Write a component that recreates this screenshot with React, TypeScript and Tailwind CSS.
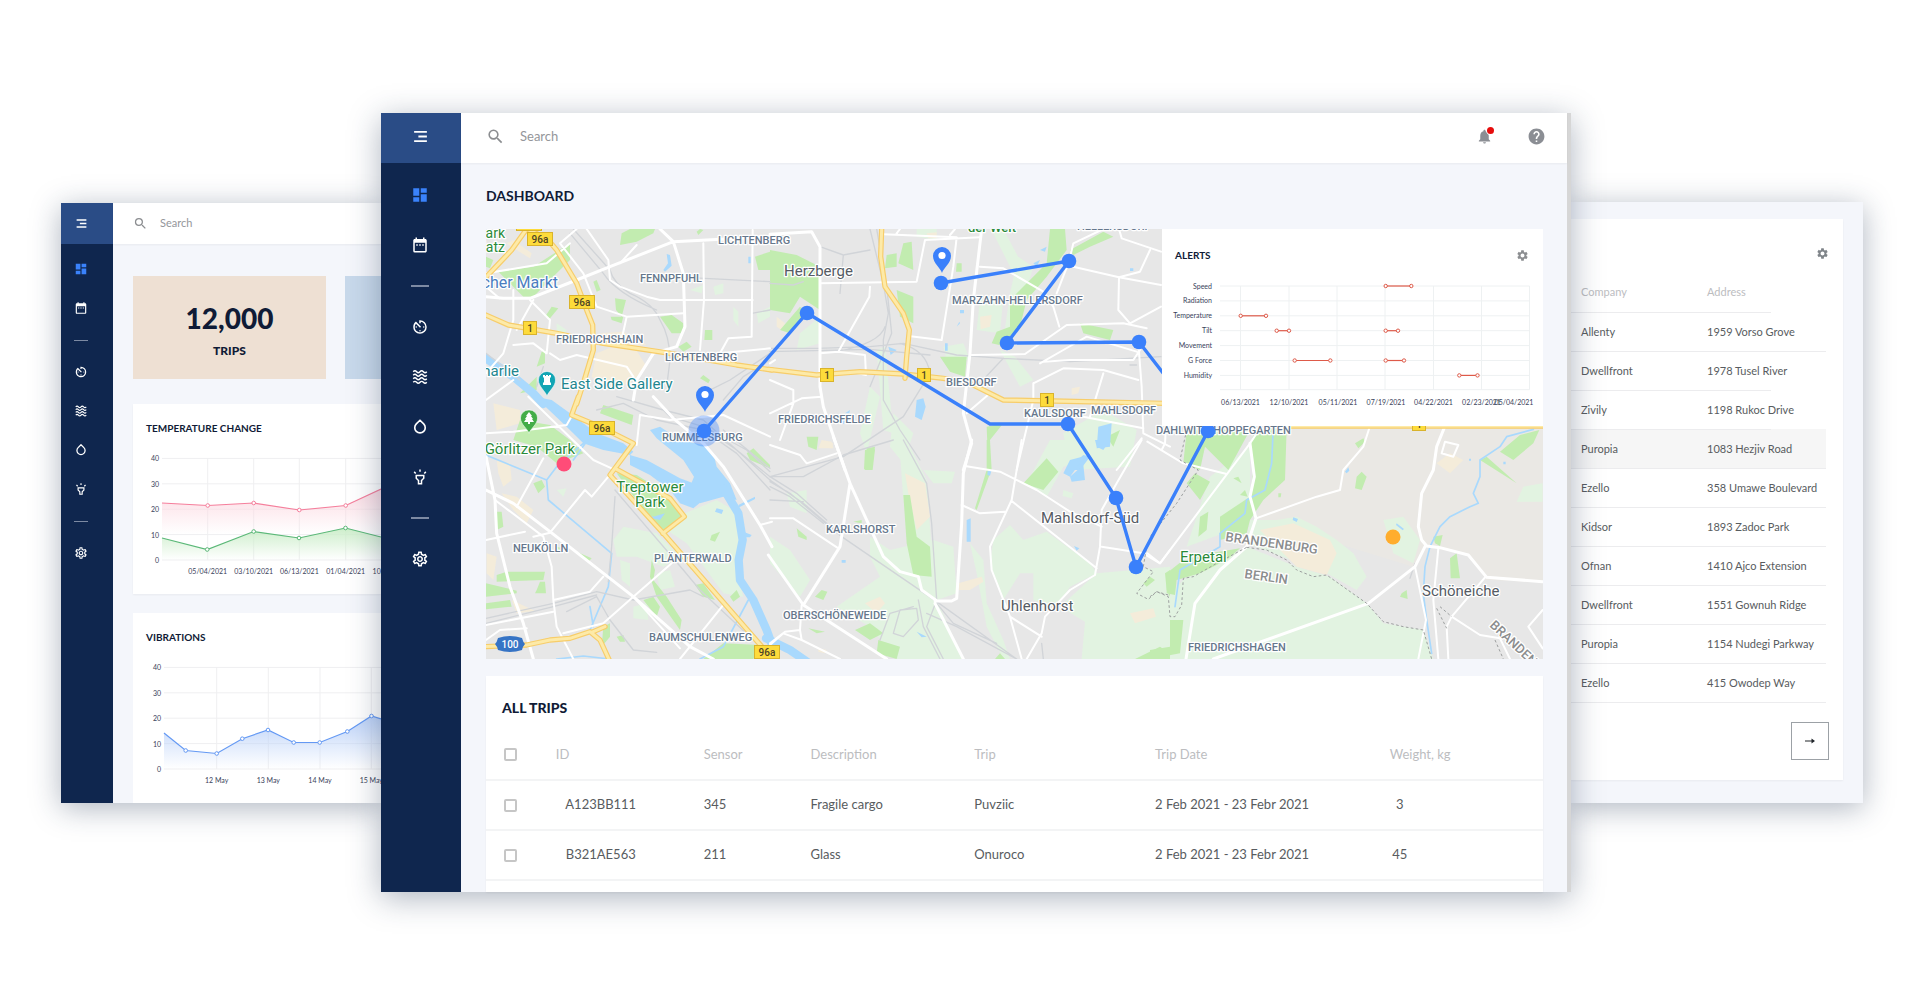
import type { ComponentType } from "react";
import {
  MdDashboard,
  MdDateRange,
  MdAvTimer,
  MdOutlineHighlight,
  MdOutlineSettings,
  MdSettings,
  MdSearch,
  MdNotifications,
  MdHelp,
} from "react-icons/md";

type Point = [number, number];

const DropIcon = ({ size }: { size?: number }) => (
  <svg viewBox="0 0 24 24" width={size} height={size} fill="none">
    <path
      d="M12 3 7.1 7.9a7 7 0 1 0 9.8 0Z"
      stroke="currentColor"
      strokeWidth="2.2"
      strokeLinejoin="round"
    />
  </svg>
);

const WAVE = "q2.25-2.6 4.5 0t4.5 0 4.5 0 4.5 0";

const WavesIcon = ({ size }: { size?: number }) => (
  <svg viewBox="0 0 24 24" width={size} height={size} fill="none">
    <path
      d={`M3 5${WAVE}M3 9.7${WAVE}M3 14.4${WAVE}M3 19.1${WAVE}`}
      stroke="currentColor"
      strokeWidth="1.9"
    />
  </svg>
);

const MenuIcon = ({ size }: { size?: number }) => (
  <svg viewBox="0 0 24 24" width={size} height={size} stroke="currentColor" strokeWidth="2.6">
    <path d="M3 5.5h18M9 12h12M3 18.5h18" />
  </svg>
);

type NavItem = { label: string; Icon: ComponentType<{ size?: number }>; active?: boolean };

const NAV: NavItem[][] = [
  [
    { label: "Dashboard", Icon: MdDashboard, active: true },
    { label: "Calendar", Icon: MdDateRange },
  ],
  [
    { label: "Speed", Icon: MdAvTimer },
    { label: "Vibrations", Icon: WavesIcon },
    { label: "Humidity", Icon: DropIcon },
    { label: "Light", Icon: MdOutlineHighlight },
  ],
  [{ label: "Settings", Icon: MdOutlineSettings }],
];

const Sidebar = ({ compact }: { compact?: boolean }) => (
  <aside
    className={`shrink-0 bg-[#0f264e] text-white ${compact ? "w-[52px]" : "w-[80px]"}`}
  >
    <button
      aria-label="Menu"
      className={`flex w-full items-center justify-center bg-[#2a4c86] ${
        compact ? "h-[41px] pr-3" : "h-[50px] pr-0.5 pb-[3px]"
      }`}
    >
      <MenuIcon size={compact ? 13 : 17} />
    </button>
    <nav className={compact ? "pt-[6px] pr-3" : "pt-[7px] pr-0.5"}>
      {NAV.map((group, i) => (
        <div key={i}>
          {i > 0 && (
            <div
              className={`flex items-center justify-center ${compact ? "h-[25px]" : "h-8"}`}
            >
              <hr
                className={`border-0 bg-[#7d8aa3] ${compact ? "h-px w-[14px]" : "h-[2px] w-[18px]"}`}
              />
            </div>
          )}
          {group.map(({ label, Icon, active }) => (
            <button
              key={label}
              aria-label={label}
              className={`flex w-full items-center justify-center ${
                compact ? "h-[39px]" : "h-[50px]"
              } ${active ? "text-[#3a82fb]" : "text-white"}`}
            >
              <Icon size={compact ? 14 : 18} />
            </button>
          ))}
        </div>
      ))}
    </nav>
  </aside>
);

const yFor = (v: number) => 116 - v * 2.54;

type Series = { color: string; fill: string; points: Point[]; dots: number };

const LineChart = ({
  id,
  left,
  series,
  ticks,
}: {
  id: string;
  left: number;
  series: Series[];
  ticks: { x: number; label: string }[];
}) => (
  <svg viewBox="0 0 248 150" preserveAspectRatio="xMinYMin slice" className="h-[150px] w-full">
    <defs>
      {series.map((s, i) => (
        <linearGradient key={i} id={`${id}-${i}`} x1="0" y1="0" x2="0" y2="1">
          <stop offset="0" stopColor={s.fill} />
          <stop offset="1" stopColor={s.fill} stopOpacity="0" />
        </linearGradient>
      ))}
    </defs>
    {[0, 10, 20, 30, 40].map((v) => (
      <g key={v}>
        <line x1={left} x2="248" y1={yFor(v)} y2={yFor(v)} stroke="#efeff1" />
        <text x={left - 3} y={yFor(v) + 3} textAnchor="end" fontSize="7" fill="#39425a">
          {v}
        </text>
      </g>
    ))}
    {ticks.map((t) => (
      <g key={t.label}>
        <line x1={t.x} x2={t.x} y1={yFor(40)} y2={yFor(0)} stroke="#efeff1" />
        <text x={t.x} y="130" textAnchor="middle" fontSize="7" fill="#39425a">
          {t.label}
        </text>
      </g>
    ))}
    {series.map((s, i) => (
      <g key={i}>
        <path
          d={`M${s.points.join(" L")} L248 ${i === 0 && series.length > 1 ? 90 : 116} L${left} ${
            i === 0 && series.length > 1 ? 90 : 116
          }Z`}
          fill={`url(#${id}-${i})`}
        />
        <polyline points={s.points.join(" ")} fill="none" stroke={s.color} strokeWidth="1.2" />
        {s.points.slice(1, 1 + s.dots).map(([x, y]) => (
          <circle key={x} cx={x} cy={y} r="1.8" fill="#fff" stroke={s.color} />
        ))}
      </g>
    ))}
  </svg>
);

const TEMPERATURE: Series[] = [
  {
    color: "#f57f9c",
    fill: "#fcdbe3",
    dots: 4,
    points: [[29, 59], [74.7, 61.5], [120.7, 59], [166.3, 66], [212.7, 61.5], [248, 45]],
  },
  {
    color: "#5bb878",
    fill: "#cdeecb",
    dots: 4,
    points: [[29, 94], [74.2, 105.5], [120.7, 87.5], [166, 94], [212.5, 84], [248, 93]],
  },
];

const VIBRATIONS: Series[] = [
  {
    color: "#6499f4",
    fill: "#bdd3f9",
    dots: 8,
    points: [
      [31, 80], [52.7, 97.5], [83.7, 100.5], [109.3, 85.7], [135, 77],
      [160.7, 89.5], [186.7, 89.5], [214.3, 78.5], [238.5, 63], [248, 66],
    ],
  },
];

const ChartsWindow = () => (
  <section className="flex w-[320px] shrink-0 overflow-hidden bg-[#f4f6fb] shadow-[0_5px_28px_rgba(30,50,80,0.36)]">
    <Sidebar compact />
    <div className="min-w-0 flex-1">
      <label className="flex h-[41px] items-center gap-3 bg-white pl-5 shadow-xs">
        <MdSearch size={15} className="text-[#8b8d90]" />
        <input
          aria-label="Search charts"
          placeholder="Search"
          className="w-24 text-[11px] outline-none placeholder:text-[#94969a]"
        />
      </label>
      <div className="flex flex-col pt-8 pl-5">
        <div className="flex gap-[19px]">
          <div className="h-[103px] w-[193px] shrink-0 bg-[#eee0d3] pt-[26px] text-center text-[#101b36]">
            <p className="text-[28px] leading-8 font-black">12,000</p>
            <p className="mt-[5px] text-[12px] leading-6 font-black">TRIPS</p>
          </div>
          <div className="flex-1 bg-[#c8d9eb]" />
        </div>
        <div className="mt-[25px] h-[190px] bg-white shadow-xs">
          <h2 className="h-10 pt-4 pl-[13px] text-[10px] leading-4 font-bold text-[#101b36]">
            TEMPERATURE CHANGE
          </h2>
          <LineChart
            id="temperature"
            left={29}
            series={TEMPERATURE}
            ticks={[
              { x: 74.7, label: "05/04/2021" },
              { x: 120.7, label: "03/10/2021" },
              { x: 166.3, label: "06/13/2021" },
              { x: 212.7, label: "01/04/2021" },
              { x: 259, label: "10/24/2021" },
            ]}
          />
        </div>
        <div className="mt-[19px] h-[190px] bg-white">
          <h2 className="h-10 pt-4 pl-[13px] text-[10px] leading-4 font-bold text-[#101b36]">
            VIBRATIONS
          </h2>
          <LineChart
            id="vibrations"
            left={31}
            series={VIBRATIONS}
            ticks={[
              { x: 83.7, label: "12 May" },
              { x: 135.3, label: "13 May" },
              { x: 187, label: "14 May" },
              { x: 238.3, label: "15 May" },
            ]}
          />
        </div>
      </div>
    </div>
  </section>
);

// Every tile has its own 3x coordinate space, placed by `at`.
type Tile = {
  at: string;
  meadow: string;
  park: string;
  sand: string;
  water: string;
  stream?: string;
  river?: string;
  rail: string;
  road: string;
  street: string;
  highway: string;
  border?: string;
};

const TILES: Tile[] = [
  {
    at: "translate(-116 -129) scale(.33333)",
    meadow:
      "M1090 620 1105 635 1105 680 1090 660ZM1030 560 1060 550 1060 580 1035 585ZM960 570 1000 555 995 580ZM1160 640 1200 620 1200 650 1165 670ZM560 670 590 690 580 720 560 700Z",
    park:
      "M385 515 490 500 600 430 600 480 560 520 520 560 490 590 460 590 430 560ZM750 435 755 400 780 387 855 387 850 400 800 425ZM870 650 905 645 940 670 940 700 905 700ZM735 595 768 600 755 650 738 630ZM722 650 760 650 755 670 725 660ZM1005 690 1027 690 1027 720 1003 720ZM525 650 545 620 565 625 540 655ZM1155 470 1200 455 1200 510 1165 510ZM925 740 950 725 965 740 940 755ZM990 835 1000 825 1020 840 1015 850ZM500 800 515 755 525 750 525 790ZM450 880 500 830 500 870ZM348 470 370 480 360 505 348 500ZM670 545 680 540 692 570 680 575ZM980 395 990 387 1000 390 985 405Z",
    sand:
      "M680 760 780 720 830 800 780 850 700 870 665 830ZM410 430 430 420 485 460 480 475 440 450ZM690 700 760 695 830 735 760 740Z",
    water: "M885 515 905 497 900 465 890 462 894 490 880 510ZM1135 470 1142 470 1142 490 1135 490Z",
    river: "M340 770 430 830 490 880 520 912",
    rail:
      "M610 387 720 510 Q730 550 780 580 850 610 870 660 900 710 900 780 L890 860M600 400 700 520 Q740 580 860 630M900 530 1200 545M1200 760 1080 840 1000 880M348 760 400 800 450 840M1200 780 1120 830 1060 900M520 800 500 860M1145 640 1200 630",
    road:
      "M348 590 400 595 480 595 620 540 720 500 910 425 1200 410M870 387 910 425 940 520 945 680 920 740 850 760 800 840 790 900",
    street:
      "M650 387 715 480 720 540 750 560 830 590 870 600 1148 600M800 435 750 490M1000 430 1002 600 990 750M1148 390 1145 710 1075 715 1050 760M348 520 530 490 600 430M620 387 570 430 640 520 680 620 770 650 940 640M770 650 750 740M430 570 430 660 400 760 348 820M490 600 440 690M480 600 540 660 530 760 490 730 430 735M540 760 570 780 620 765 770 800 790 830M348 560 388 595M348 900 430 840M1050 760 1200 745",
    highway:
      "M470 387 425 450 340 540M470 387 530 415 560 450 620 550 650 630 668 675 670 750 640 850 620 912M340 642 415 675 560 700 700 730 900 760 1100 795 1206 810",
  },
  {
    at: "translate(-116 171) scale(.33333)",
    meadow:
      "M945 340 1040 300 1090 330 1110 400 1100 520 1120 590 1060 580 950 430 890 390ZM730 420 760 380 860 400 930 470 880 500 800 470 740 470ZM860 520 900 510 915 560 870 570ZM790 620 830 610 835 660 790 655ZM750 480 780 490 780 560 755 540ZM560 270 590 265 580 290Z",
    park:
      "M740 220 800 225 905 290 940 350 880 395 820 330ZM348 610 420 600 425 620 348 628ZM380 525 410 515 525 515 520 540 380 545ZM348 550 440 572 440 580 348 590ZM700 15 790 45 785 75 690 40ZM450 60 540 75 600 120 640 160 560 190 500 140 430 120ZM1130 160 1150 145 1200 195 1200 205 1140 180ZM620 455 665 475 655 485ZM845 480 855 510 850 540 890 590 935 660 930 690 860 590 840 530ZM1000 777 1060 730 1170 735 1150 777ZM820 600 850 590 870 620 860 650ZM975 555 1000 550 1035 600 1000 590ZM1080 590 1100 570 1110 590 1090 605ZM1025 405 1050 395 1035 425 1020 420ZM695 740 700 680 720 670 720 710ZM490 250 515 240 525 260 505 280ZM380 335 395 335 400 380 380 390ZM500 570 510 545 525 545 528 580 495 580ZM740 710 760 705 765 725 750 725ZM560 440 580 445 570 455Z",
    sand:
      "M380 180 420 190 425 240 400 260 385 220ZM395 280 440 290 490 330 470 370 430 330ZM350 460 380 470 370 540 350 520ZM425 600 495 633 440 640ZM370 10 450 30 450 70 380 90Z",
    water:
      "M495 -10 545 0 600 40 680 100 760 130 790 155 780 165 700 150 640 130 590 80ZM780 165 830 180 930 235 970 250 980 290 1000 300 970 325 930 310 900 270 840 225 780 195ZM840 90 870 80 930 120 1000 135 1030 160 1040 200 1080 250 1100 300 1060 290 990 310 960 260 972 230 940 180 860 115ZM835 345 850 350 885 340 870 360 845 355ZM1040 325 1060 330 1055 342 1035 335ZM1105 315 1155 290 1155 297 1108 322ZM1120 395 1145 405 1140 412 1120 412Z",
    river: "M1060 265 1105 340 1118 420 1106 480 1110 540 1150 600 1190 690 1215 760",
    stream:
      "M348 165 530 240 535 300 725 460 715 560 660 690M530 240 560 200 640 130M1135 600 1060 740 990 777M660 620 670 680M560 777 640 768 720 777M660 110 610 180",
    rail:
      "M735 290 725 440 715 545M735 270 940 510 990 570 1150 720M348 655 550 610 680 575 790 600 960 570 1000 590M348 670 550 620 680 585M590 635 680 590 720 660 790 750 860 757M740 -10 880 30 900 50 1000 80 1100 150 1200 230M1000 90 1100 160 1200 270M1020 90 1130 150 1200 215M1060 90 1200 205M880 30 1000 60 1200 240M680 30 760 10 860 60 1000 90",
    road:
      "M348 270 430 310 540 395 790 590 960 740 1030 777M850 -10 910 55 1000 130 1060 200 1170 375 1206 440M348 170 375 300 380 400 420 560 460 670 490 777",
    street:
      "M375 300 520 410 545 500 550 600 560 680 610 777M348 100 430 95 590 75M475 -10 670 180 725 205M520 175 440 320M348 420 465 395M490 410 540 398 645 270 665 290 715 230M550 600 660 575 700 530M348 675 550 635M580 700 700 670 790 590 905 490M790 590 930 745M1060 615 930 777M348 720 390 690 470 685M800 135 810 45 900 60 1060 45 1200 110M1170 375 1206 365M590 75 610 40",
    highway:
      "M625 -10 605 45 690 80 790 130 720 225 880 400 1206 775M735 205 900 295 943 350 878 400M340 740 470 735 540 720 600 715 660 695 690 720 720 785M705 680 665 697",
  },
  {
    at: "translate(284 -29) scale(.33333)",
    meadow:
      "M745 170 790 200 760 300 720 440 700 420 720 280ZM90 400 150 350 150 430 80 450ZM320 450 345 440 370 700 340 690ZM690 450 735 470 790 540 750 560ZM1000 630 1100 690 1080 800 900 810 880 700ZM370 640 430 700 400 790 360 740ZM520 440 580 430 600 480 530 480ZM665 90 700 87 760 200 740 240ZM270 700 300 560 330 590 290 760ZM440 87 500 87 500 120 440 110ZM630 300 700 290 690 400 620 390Z",
    park:
      "M0 150 80 165 150 200 150 330 90 290 60 340 0 330ZM350 165 380 160 380 200 345 205ZM400 130 425 125 430 210 385 190ZM380 270 430 290 430 370 390 350ZM510 470 590 470 585 530 540 515ZM840 87 885 87 890 150 830 230 770 300 750 380 710 440 665 430 680 395 720 380 720 300 830 190ZM900 150 1000 95 1030 110 960 140 910 165ZM930 370 1030 390 1020 420 940 400ZM650 680 700 670 660 720 665 810 655 810ZM290 745 315 740 305 810 285 810ZM110 710 145 710 140 750 115 740ZM1010 710 1050 690 1030 740ZM560 190 575 190 575 215 558 215ZM30 390 90 320 110 340 60 400Z",
    sand:
      "M470 100 500 97 500 115 475 115ZM155 720 185 725 190 745 145 745ZM630 350 665 345 660 380 632 388ZM905 565 930 560 925 580 905 585ZM20 350 45 370 35 390 20 380Z",
    water:
      "M440 600 460 595 467 620 455 660 435 650ZM985 680 1025 670 1020 740 980 745ZM890 810 940 765 960 770 930 810ZM525 430 533 430 533 452 525 452ZM355 440 380 450 362 465ZM810 150 830 140 825 155ZM1080 205 1090 205 1090 213 1080 213ZM225 640 240 630 238 640ZM210 670 225 655 222 672ZM570 330 582 330 582 340 570 340ZM560 380 568 365 570 370ZM790 190 810 180 800 200Z",
    rail:
      "M0 445 140 445 300 440 400 430 560 465 700 475 900 485 1173 470M0 455 300 448 480 465M300 87 340 250 355 340 340 420 340 600 390 690 450 780M320 87 350 260 365 400 300 560M345 380Q330 430 200 455M390 430Q470 450 480 520L400 650 220 770 0 830M150 140 220 165 300 150M0 250 70 255 100 245M220 165 210 280M700 475 620 560M1100 495 1080 495",
    road:
      "M0 103 125 95 150 140 150 560 160 620 225 810M635 87 610 300 600 460 580 640 605 730 580 810",
    street:
      "M150 250 440 245 465 120 630 112M340 103 560 112 550 200 515 420 415 408M380 100 390 87M540 105 555 87M300 260 298 290 205 455 150 460M205 455 285 465 288 525 265 520M630 200 700 205 820 275 850 320 868 380M910 200 1047 232 1173 255M897 185 860 280M897 185 910 130 1000 87M1047 87 1055 115 1173 155M1140 150 1110 215 1047 232 1045 330 1080 370 1173 320M605 465 765 462 890 375 1060 370 1130 385M820 485 900 480 1090 480 1110 450M810 490 880 450 950 410 1100 455M790 550 880 505 1000 510 1105 540M790 550 790 600 740 810M1000 520 960 650M1105 430 1115 560 1120 700 1200 740M940 650 1120 685M1115 715 1040 810M0 540 70 570 70 610 30 720M0 640 95 595 155 590M0 735 90 765 110 790 200 760M590 640 660 580M0 490 15 480",
    highway:
      "M335 87 332 170 345 260 400 340 418 390 410 470 405 535M-4 508 140 525 270 515 400 522 520 535 600 550 700 600 850 603 1180 610",
  },
  {
    at: "translate(284 211) scale(.33333)",
    meadow:
      "M0 290 60 330 120 420 90 470 0 370ZM300 290 360 330 490 300 550 320 560 460 500 480 580 657 380 657 300 560 200 500 330 410 300 350ZM460 90 555 95 545 130 490 130ZM670 300 720 255 760 300 830 275 960 370 980 400 900 440 860 500 790 480 790 400 750 400 700 480 660 370ZM980 400 1200 380 1200 657 935 657 945 545 870 500ZM50 160 110 150 110 220 60 200ZM840 0 960 0 940 60 880 80 830 170 770 130ZM390 40 420 20 470 120 490 400 440 300 400 180ZM880 150 910 160 905 175 878 168ZM600 310 640 360 650 490 700 600 720 657 700 657 650 560 620 400Z",
    park:
      "M760 130 830 55 865 95 820 150ZM400 165 420 165 440 290 480 320 485 410 430 405 410 310ZM285 30 315 28 308 90 282 88ZM325 600 390 620 380 657 320 640ZM255 570 300 550 340 580 300 600ZM650 0 660 0 660 100 620 210 615 205 650 90ZM1095 657 1170 620 1200 640 1200 657ZM80 265 110 290 110 300 85 290ZM115 565 165 575 140 580ZM250 245 275 240 275 250ZM135 470 155 450 172 455 160 480ZM1120 430 1140 410 1155 420 1130 440ZM675 657 690 640 705 657ZM1185 400 1200 390 1200 470 1190 450Z",
    sand:
      "M405 100 465 130 480 230 440 270 415 160ZM285 490 330 470 345 490 320 520ZM565 430 635 410 640 425 600 450 565 450ZM1080 520 1150 505 1158 530 1095 550ZM145 625 170 630 165 640 145 635ZM155 5 190 10 185 25 150 22Z",
    water:
      "M590 240 602 235 602 305 590 305ZM880 100 900 60 945 48 900 110ZM900 110 940 75 945 120 905 125ZM975 0 1020 0 1000 30 980 20ZM440 575 470 590 455 592ZM215 360 227 360 227 368 215 368ZM653 93 664 93 660 107 652 105ZM912 318 928 325 920 332Z",
    river: "M-12 595 60 630 115 668",
    rail:
      "M0 125 60 160 215 290 500 485 740 657M0 110 80 160 170 240M0 140 60 170 160 250M0 120 100 190 200 275M400 0 470 130 485 250 500 480 470 560 520 657M370 0 220 45 100 110 0 110M0 180 100 185M370 580 390 510 440 505 445 540 400 590ZM330 600 360 520 430 500M820 657 815 610M500 490 550 550 680 610M445 480 460 560 510 657M470 520 560 560 740 657",
    road:
      "M190 -10 240 130 210 320 100 495 -5 345M240 130 340 350 390 395 445 410 455 450 500 482M495 490 580 657M100 495 350 657M605 0 580 100 575 250 560 475 545 483 495 482",
    street:
      "M0 235 70 235 205 325M585 78 690 95 800 150 900 215 995 260M755 0 725 180 660 320 665 390 720 530 755 657M720 530 815 590M770 657 815 580 825 530 900 450 975 405 990 320 995 210 1040 130 1115 0M725 183 980 385M995 320 1120 340 1170 370 1200 330M575 195 630 220 705 215M0 610 45 575 90 570 95 495M0 615 40 580 95 600 210 657M90 570 95 600",
    highway: "",
    border: "M1160 260 1130 320 1120 380 1150 395 1100 460 1135 478 1160 455 1195 465",
  },
  {
    at: "translate(664 191) scale(.33333)",
    meadow:
      "M55 530 100 480 290 380 440 440 540 470 650 550 700 610 820 630 850 717 55 717ZM180 170 300 80 300 230 310 290 220 340 110 380ZM300 300 380 300 440 290 500 320 560 360 610 400 650 470 620 510 530 460 480 440 290 370ZM700 300 760 290 810 360 790 430 730 400ZM1120 200 1178 190 1178 245 1100 245Z",
    park:
      "M110 30 300 30 235 150 165 80 150 150 100 130ZM320 25 410 25 405 180 340 240 300 300 290 340 210 360 210 290 300 230 310 150 300 70ZM50 460 100 420 180 400 270 385 230 420 150 460 80 480 75 525 50 520ZM150 290 175 275 170 330 145 350ZM110 190 135 160 180 185 150 240ZM1050 95 1110 45 1168 30 1150 70 1090 120ZM990 120 1010 110 1100 190ZM615 70 640 55 645 65 625 85ZM620 170 635 155 650 170 635 210 615 205ZM850 350 878 345 870 378 855 370ZM900 415 920 400 930 475 902 475ZM755 520 770 510 773 537 750 530ZM60 600 100 600 90 700 0 717 0 690 60 680ZM270 225 285 210 293 230ZM250 175 265 170 275 190ZM385 220 394 220 392 232 385 232Z",
    sand:
      "M330 330 430 310 540 360 560 400 530 465 440 440ZM860 130 900 100 940 120 900 160Z",
    water:
      "M585 155 595 142 598 152 590 160ZM430 292 444 297 440 306 428 300ZM740 310 762 327 758 331 738 315ZM1060 125 1067 125 1067 133 1060 133ZM957 116 963 116 963 122 957 122Z",
    stream:
      "M370 18 365 130 345 210 290 240 285 280 210 340 210 380 90 450 75 560M1150 28 1070 50 1050 80 990 120 990 170 970 220 985 250 960 260 900 290 870 320 840 380 825 440 820 520 830 600 845 700",
    rail: "M795 430 780 475M645 0 600 20",
    road:
      "M300 70 313 170 300 230 318 295 290 380 210 450 135 550 108 717M885 18 860 80 850 150 815 220 805 320 815 360 830 378 870 383 955 405 1010 472 1178 485M825 380 795 440 655 550 190 717",
    street:
      "M-8 400 30 430 300 70 320 40M-8 65 50 100 100 130 230 162M318 295 500 230 570 210 580 150 640 80 660 18M795 440 828 600 805 717M865 385 850 540 865 717M1005 472 905 590 890 620 895 717M905 590 990 645 1050 655 1080 717M1178 570 1135 620 1178 685M48 18 45 70 35 90M885 65 925 75 910 110 875 100Z",
    highway: "M410 18 1182 18",
    border:
      "M110 30 90 120 145 150 80 250 0 350M290 382 350 390 410 420 440 450 490 470 530 465 650 550 700 605 760 620 820 630 845 717M290 382 200 430 130 470 100 475 95 555 75 590 60 590 55 530 20 515 0 530M860 565 890 625M870 560 905 590M1035 660 1060 717",
  },
];

const AREA_LAYERS = [
  { key: "meadow", fill: "#e2f3e1" },
  { key: "sand", fill: "#f4ecda" },
  { key: "park", fill: "#c2ecb0" },
  { key: "water", fill: "#a9d9fd" },
] as const;

const LINE_LAYERS = [
  { key: "stream", stroke: "#a9d9fd", width: 5 },
  { key: "river", stroke: "#a9d9fd", width: 25 },
  { key: "rail", stroke: "#d1d4d8", width: 4 },
  { key: "street", stroke: "#ffffff", width: 6 },
  { key: "road", stroke: "#ffffff", width: 9 },
  { key: "highway", stroke: "#f7cd6a", width: 16 },
  { key: "highway", stroke: "#fdeaa8", width: 9 },
] as const;

const DISTRICTS: [number, number, string][] = [
  [154, 53, "FENNPFUHL"],
  [232, 15, "LICHTENBERG"],
  [70, 114, "FRIEDRICHSHAIN"],
  [179, 132, "LICHTENBERG"],
  [176, 212, "RUMMELSBURG"],
  [27, 323, "NEUKÖLLN"],
  [168, 333, "PLÄNTERWALD"],
  [163, 412, "BAUMSCHULENWEG"],
  [466, 75, "MARZAHN-HELLERSDORF"],
  [591, 1, "HELLERSDORF"],
  [460, 157, "BIESDORF"],
  [538, 188, "KAULSDORF"],
  [605, 185, "MAHLSDORF"],
  [292, 194, "FRIEDRICHSFELDE"],
  [340, 304, "KARLSHORST"],
  [297, 390, "OBERSCHÖNEWEIDE"],
  [670, 205, "DAHLWITZ-HOPPEGARTEN"],
  [702, 422, "FRIEDRICHSHAGEN"],
];

const TOWNS: [number, number, string][] = [
  [298, 47, "Herzberge"],
  [555, 294, "Mahlsdorf-Süd"],
  [515, 382, "Uhlenhorst"],
  [936, 367, "Schöneiche"],
];

const SHIELDS: [number, number, string][] = [
  [30, -12, "96a"],
  [41, 3, "96a"],
  [83, 66, "96a"],
  [103, 192, "96a"],
  [268, 416, "96a"],
  [37, 92, "1"],
  [334, 139, "1"],
  [431, 139, "1"],
  [554, 164, "1"],
  [926, 188, "1"],
];

const ROUTES: Point[][] = [
  [[218, 202], [321, 84], [504, 195], [582, 195], [630, 269], [650, 338], [722, 202]],
  [[455, 54], [583, 32], [521, 114], [653, 113], [722, 202]],
];

const STOPS: Point[] = [
  [218, 202], [321, 84], [582, 195], [630, 269], [650, 338], [722, 202],
  [455, 54], [583, 32], [521, 114], [653, 113],
];

const PIN = "M0 17C-1.5 12-9 7-9 0a9 9 0 0 1 18 0C9 7 1.5 12 0 17Z";

const TripMap = () => (
  <svg
    viewBox="0 0 1057 430"
    preserveAspectRatio="xMinYMin slice"
    className="h-[430px] w-full bg-[#e7e7e7] [font-family:Roboto,sans-serif]"
    role="img"
    aria-label="Trip map"
  >
    <path
      d="M797 197H1057V353L1000 351 981 325 938 318 928 338 850 314 844 334 771 288Z"
      fill="#eae8e4"
    />
    {AREA_LAYERS.map(({ key, fill }) =>
      TILES.map((t) => <path key={key + t.at} transform={t.at} d={t[key]} fill={fill} />)
    )}
    {LINE_LAYERS.map(({ key, stroke, width }) =>
      TILES.map((t) => (
        <path
          key={key + width + t.at}
          transform={t.at}
          d={t[key] ?? ""}
          fill="none"
          stroke={stroke}
          strokeWidth={width}
          strokeLinejoin="round"
          strokeLinecap="round"
        />
      ))
    )}
    {TILES.map((t) => (
      <path
        key={t.at}
        transform={t.at}
        d={t.border ?? ""}
        fill="none"
        stroke="#9c9f9f"
        strokeWidth="3"
        strokeDasharray="8 7"
      />
    ))}

    {SHIELDS.map(([x, y, label]) => (
      <g key={`${x}-${y}`}>
        <rect
          x={x + 0.5}
          y={y + 0.5}
          width={label === "1" ? 13 : 25}
          height="13"
          fill="#fddb3b"
          stroke="#d9b32c"
        />
        <text
          x={x + (label === "1" ? 7 : 13)}
          y={y + 11}
          textAnchor="middle"
          fontSize="10"
          fontWeight="500"
          fill="#4d4526"
        >
          {label}
        </text>
      </g>
    ))}
    <path d="M12 409Q24 405 36 409 37 413 39 415 37 417 36 421 24 425 12 421 11 417 9 415 11 413 12 409Z" fill="#3674c5" />
    <text x="24" y="419" textAnchor="middle" fontSize="10" fontWeight="500" fill="#fff">
      100
    </text>

    <g stroke="#fff" strokeWidth="2.5" strokeLinejoin="round" paintOrder="stroke">
      <g fontSize="11" fontWeight="500" fill="#66778c">
        {DISTRICTS.map(([x, y, label]) => (
          <text key={`${x}-${y}`} x={x} y={y}>
            {label}
          </text>
        ))}
      </g>
      <g fontSize="15" fill="#555b64">
        {TOWNS.map(([x, y, label]) => (
          <text key={label} x={x} y={y}>
            {label}
          </text>
        ))}
      </g>
      <g fontSize="15" fill="#2a8a3a">
        <text x="19" y="9" fontSize="14" textAnchor="end">ark</text>
        <text x="19" y="23" fontSize="14" textAnchor="end">latz</text>
        <text x="89" y="225" textAnchor="end">Görlitzer Park</text>
        <text x="164" y="263" textAnchor="middle">Treptower</text>
        <text x="164" y="278" textAnchor="middle">Park</text>
        <text x="482" y="3" fontSize="13" fontWeight="500">der Welt</text>
        <text x="694" y="333">Erpetal</text>
      </g>
      <text x="72" y="59" fontSize="16" textAnchor="end" fill="#4b7dc0">cher Markt</text>
      <g fontSize="15" fill="#22868f">
        <text x="33" y="147" textAnchor="end">harlie</text>
        <text x="75" y="160">East Side Gallery</text>
      </g>
      <g fontSize="13" fontWeight="500" fill="#8b8d8e">
        <text transform="translate(739 312) rotate(8)">BRANDENBURG</text>
        <text transform="translate(758 349) rotate(8)">BERLIN</text>
        <text transform="translate(1003 397) rotate(43)">BRANDENBURG</text>
      </g>
    </g>

    <g transform="translate(61 151)">
      <path d={PIN} transform="scale(.95)" fill="#12a5b4" stroke="#fff" strokeWidth=".6" />
      <path d="M-4 5v-2l1-1v-4l-1-1v-2h2v1h1v-1h2v1h1v-1h2v2l-1 1v4l1 1v2Z" fill="#fff" />
    </g>
    <g transform="translate(43 189)">
      <path d={PIN} transform="scale(.95 .9)" fill="#43ad48" stroke="#fff" strokeWidth=".6" />
      <path d="M0-6 3-2H2L4 1H3L5 4H1v2h-2V4h-4l2-3h-1l2-3h-1Z" fill="#fff" />
    </g>

    <g fill="none" stroke="#3a80fb" strokeWidth="3.4" strokeLinejoin="round">
      {ROUTES.map((points, i) => (
        <polyline key={i} points={points.join(" ")} />
      ))}
    </g>
    <circle cx="218" cy="202" r="15.5" fill="#3a80fb" fillOpacity=".35" />
    {STOPS.map(([x, y]) => (
      <circle key={`${x}-${y}`} cx={x} cy={y} r="7.3" fill="#3a80fb" />
    ))}
    {[[219, 166], [456, 27]].map(([x, y]) => (
      <g key={x} transform={`translate(${x} ${y})`}>
        <path d={PIN} fill="#3a80fb" />
        <circle cy="-.5" r="3.6" fill="#fff" />
      </g>
    ))}
    <circle cx="78" cy="235" r="7.5" fill="#ff4c78" />
    <circle cx="907" cy="308" r="7.5" fill="#ffad2d" />
  </svg>
);

const ALERT_ROWS: { label: string; ranges: Point[] }[] = [
  { label: "Speed", ranges: [[223.7, 249.3]] },
  { label: "Radiation", ranges: [] },
  { label: "Temperature", ranges: [[78.7, 104]] },
  { label: "Tilt", ranges: [[114.7, 127], [223.7, 236]] },
  { label: "Movement", ranges: [] },
  { label: "G Force", ranges: [[132.7, 168.3], [223.7, 242]] },
  { label: "Humidity", ranges: [[297.3, 315.5]] },
];

const ALERT_DATES: Point[] = [
  [78.5, 78.5], [127, 127], [175, 176], [223, 224], [271.5, 271.5], [319.5, 319.5], [367.5, 352],
];

const DATE_LABELS = [
  "06/13/2021",
  "12/10/2021",
  "05/11/2021",
  "07/19/2021",
  "04/22/2021",
  "02/23/2021",
  "05/04/2021",
];

const Alerts = () => (
  <section className="absolute top-0 right-0 w-[381px] bg-white">
    <header className="flex h-[52px] items-center justify-between pr-[14px] pl-[13px]">
      <h2 className="text-[10px] font-bold text-[#101b36]">ALERTS</h2>
      <button aria-label="Alert settings" className="text-[#8b8d90]">
        <MdSettings size={13} />
      </button>
    </header>
    <svg viewBox="0 0 381 145" className="w-full">
      {ALERT_ROWS.map(({ label }, i) => (
        <g key={label}>
          <line x1="58" x2="367.5" y1={5 + i * 14.9} y2={5 + i * 14.9} stroke="#eef1f2" />
          <text x="50" y={7.5 + i * 14.9} textAnchor="end" fontSize="7" fill="#39425a">
            {label}
          </text>
        </g>
      ))}
      <line x1="58" x2="367.5" y1="108.7" y2="108.7" stroke="#eef1f2" />
      {ALERT_DATES.map(([x, labelX], i) => (
        <g key={x}>
          <line x1={x} x2={x} y1="5" y2="108.7" stroke="#eef1f2" />
          <text x={labelX} y="124" textAnchor="middle" fontSize="7" fill="#39425a">
            {DATE_LABELS[i]}
          </text>
        </g>
      ))}
      {ALERT_ROWS.map(({ label, ranges }, i) =>
        ranges.map(([from, to]) => (
          <g key={label + from} stroke="#de5a49" fill="#fff">
            <line x1={from} x2={to} y1={5 + i * 14.9} y2={5 + i * 14.9} strokeWidth="1.2" />
            <circle cx={from} cy={5 + i * 14.9} r="1.7" />
            <circle cx={to} cy={5 + i * 14.9} r="1.7" />
          </g>
        ))
      )}
    </svg>
  </section>
);

const TRIPS = [
  { id: "A123BB111", sensor: "345", cargo: "Fragile cargo", trip: "Puvziic", date: "2 Feb 2021 - 23 Febr 2021", weight: 3 },
  { id: "B321AE563", sensor: "211", cargo: "Glass", trip: "Onuroco", date: "2 Feb 2021 - 23 Febr 2021", weight: 45 },
];

const Checkbox = ({ label }: { label: string }) => (
  <input
    type="checkbox"
    aria-label={label}
    className="ml-[18px] block size-[13px] appearance-none rounded-[2px] border-2 border-[#c6c6c6] bg-white checked:bg-[#3a82fb]"
  />
);

const TripsTable = () => (
  <section className="mt-[17px] bg-white pb-[11px] shadow-xs">
    <h2 className="pt-5 pb-[10px] pl-4 text-[14px] leading-6 font-black text-[#101b36]">
      ALL TRIPS
    </h2>
    <table className="w-full table-fixed text-left text-[13px] text-[#585c60]">
      <colgroup>
        <col className="w-[6.6%]" />
        <col className="w-[14%]" />
        <col className="w-[10.1%]" />
        <col className="w-[15.5%]" />
        <col className="w-[17.1%]" />
        <col className="w-[22.2%]" />
        <col />
      </colgroup>
      <thead>
        <tr className="h-[50px] border-b-2 border-[#f3f4f5] text-[#bcbdbf]">
          <th>
            <Checkbox label="Select all trips" />
          </th>
          <th className="font-normal">ID</th>
          <th className="font-normal">Sensor</th>
          <th className="font-normal">Description</th>
          <th className="font-normal">Trip</th>
          <th className="font-normal">Trip Date</th>
          <th className="font-normal">Weight, kg</th>
        </tr>
      </thead>
      <tbody>
        {TRIPS.map((t) => (
          <tr key={t.id} className="h-[50px] border-b-2 border-[#f3f4f5]">
            <td>
              <Checkbox label={`Select trip ${t.id}`} />
            </td>
            <td>
              <span className="inline-block w-[90px] text-center">{t.id}</span>
            </td>
            <td>{t.sensor}</td>
            <td>{t.cargo}</td>
            <td>{t.trip}</td>
            <td>{t.date}</td>
            <td>
              <span className="inline-block w-5 text-center">{t.weight}</span>
            </td>
          </tr>
        ))}
      </tbody>
    </table>
  </section>
);

const DashboardWindow = () => (
  <main className="relative z-10 flex min-w-0 flex-1 border-r-4 border-[#d6d6d6] bg-[#f4f6fb] shadow-[0_6px_30px_rgba(30,50,80,0.36)]">
    <Sidebar />
    <div className="min-w-0 flex-1">
      <header className="flex h-[50px] items-center justify-between bg-white pr-[21px] pb-[3px] pl-[25px] shadow-xs">
        <label className="flex items-center gap-[15px]">
          <MdSearch size={19} className="text-[#8b8d90]" />
          <input
            aria-label="Search"
            placeholder="Search"
            className="w-64 text-[13px] outline-none placeholder:text-[#94969a]"
          />
        </label>
        <div className="flex items-center gap-[34px] text-[#8b8e94]">
          <button aria-label="Notifications" className="relative">
            <MdNotifications size={17} />
            <span className="absolute -top-px -right-px size-[7px] rounded-full bg-[#e60d0d] ring-1 ring-white" />
          </button>
          <button aria-label="Help">
            <MdHelp size={19} />
          </button>
        </div>
      </header>
      <div className="pr-6 pl-[25px]">
        <h1 className="flex h-[66px] items-center pb-0.5 text-[14px] font-bold text-[#101b36]">
          DASHBOARD
        </h1>
        <div className="relative">
          <TripMap />
          <Alerts />
        </div>
        <TripsTable />
      </div>
    </div>
  </main>
);

const COMPANIES = [
  { name: "Allenty", address: "1959 Vorso Grove" },
  { name: "Dwellfront", address: "1978 Tusel River", short: true },
  { name: "Zivily", address: "1198 Rukoc Drive", short: true },
  { name: "Puropia", address: "1083 Hezjiv Road", selected: true },
  { name: "Ezello", address: "358 Umawe Boulevard" },
  { name: "Kidsor", address: "1893 Zadoc Park" },
  { name: "Ofnan", address: "1410 Ajco Extension" },
  { name: "Dwellfront", address: "1551 Gownuh Ridge" },
  { name: "Puropia", address: "1154 Nudegi Parkway" },
  { name: "Ezello", address: "415 Owodep Way" },
];

const CompaniesWindow = () => (
  <section className="w-[292px] shrink-0 bg-[#f4f6fb] pt-[17px] pr-5 pb-[23px] shadow-[0_5px_28px_rgba(30,50,80,0.36)]">
    <div className="bg-white pb-5 shadow-xs">
      <div className="flex h-[54px] justify-end pt-7 pr-[14px]">
        <button aria-label="Table settings" className="h-[13px] text-[#7f8489]">
          <MdSettings size={13} />
        </button>
      </div>
      <table className="w-[255px] table-fixed text-left text-[11px] whitespace-nowrap text-[#585c60]">
        <colgroup>
          <col className="w-[136px]" />
          <col className="w-[64px]" />
          <col />
        </colgroup>
        <thead>
          <tr className="h-[39px] text-[#bcbdbf]">
            <th className="border-b border-[#ececee] pl-[10px] font-normal">Company</th>
            <th className="border-b border-[#ececee] font-normal">Address</th>
            <td />
          </tr>
        </thead>
        <tbody>
          {COMPANIES.map((c) => (
            <tr key={c.address} className={`h-[39px] ${c.selected ? "bg-[#f6f6f6]" : ""}`}>
              <td className="border-b border-[#ececee] pl-[10px]">{c.name}</td>
              <td className="border-b border-[#ececee]">{c.address}</td>
              <td className={c.short ? "" : "border-b border-[#ececee]"} />
            </tr>
          ))}
        </tbody>
      </table>
      <div className="flex justify-end pt-[19px] pr-[14px]">
        <button
          aria-label="Next page"
          className="flex size-[38px] items-center justify-center border border-[#9ca1a6] text-[#22262b]"
        >
          <svg viewBox="0 0 10 6" width="10" height="6" fill="currentColor">
            <path d="M0 2.5h6.5V.6L10 3 6.5 5.4V3.5H0Z" />
          </svg>
        </button>
      </div>
    </div>
  </section>
);

export default function App() {
  return (
    <div className="flex min-h-screen items-start bg-white pt-[113px] pr-[57px] pl-[61px] [font-family:Lato,sans-serif]">
      <div className="flex w-full items-center">
        <ChartsWindow />
        <DashboardWindow />
        <CompaniesWindow />
      </div>
    </div>
  );
}
